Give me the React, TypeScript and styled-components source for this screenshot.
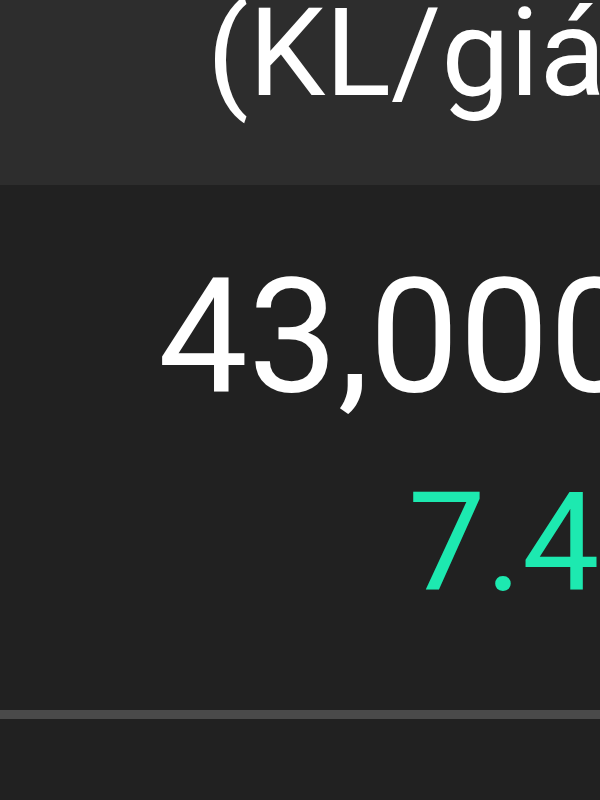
import styled, { createGlobalStyle } from "styled-components";

const Global = createGlobalStyle`
  html, body {
    margin: 0;
    padding: 0;
    background: #212121;
    font-family: Roboto, "Noto Sans", "Liberation Sans", sans-serif;
  }
  #root {
    width: 600px;
    height: 800px;
    overflow: hidden;
  }
`

const Board = styled.section`
  display: flex;
  flex-direction: column;
  width: 600px;
  height: 800px;
  overflow: hidden;
  background: #212121;
`

const HeadRow = styled.header`
  display: flex;
  height: 185px;
  flex-shrink: 0;
  background: #2d2d2d;
  padding-left: 207px;
  box-sizing: border-box;
`

const HeadCell = styled.div`
  color: #ffffff;
  font-size: 122px;
  line-height: 0.88;
  white-space: nowrap;
`

const QuoteRow = styled.div`
  display: flex;
  flex-direction: column;
  height: 525px;
  flex-shrink: 0;
  padding-top: 72px;
  box-sizing: border-box;
`

const Figure = styled.div<{ size: number; indent: number; tone: string; gap?: number }>`
  padding-left: ${p => p.indent}px;
  margin-top: ${p => p.gap ?? 0}px;
  font-size: ${p => p.size}px;
  line-height: 1;
  color: ${p => p.tone};
  white-space: nowrap;
`

const Divider = styled.hr`
  margin: 0;
  border: none;
  height: 9px;
  flex-shrink: 0;
  background: #4a4a4a;
`

const NextRow = styled.div`
  flex: 1;
  background: #212121;
`

export default function App() {
  return (
    <>
      <Global/>
      <Board>
        <HeadRow>
          <HeadCell>(KL/giá)</HeadCell>
        </HeadRow>
        <QuoteRow>
          <Figure size={160} indent={158} tone="#ffffff">43,000</Figure>
          <Figure size={138} indent={408} tone="#1de9b0" gap={57}>7.4</Figure>
        </QuoteRow>
        <Divider/>
        <NextRow/>
      </Board>
    </>
  );
}
